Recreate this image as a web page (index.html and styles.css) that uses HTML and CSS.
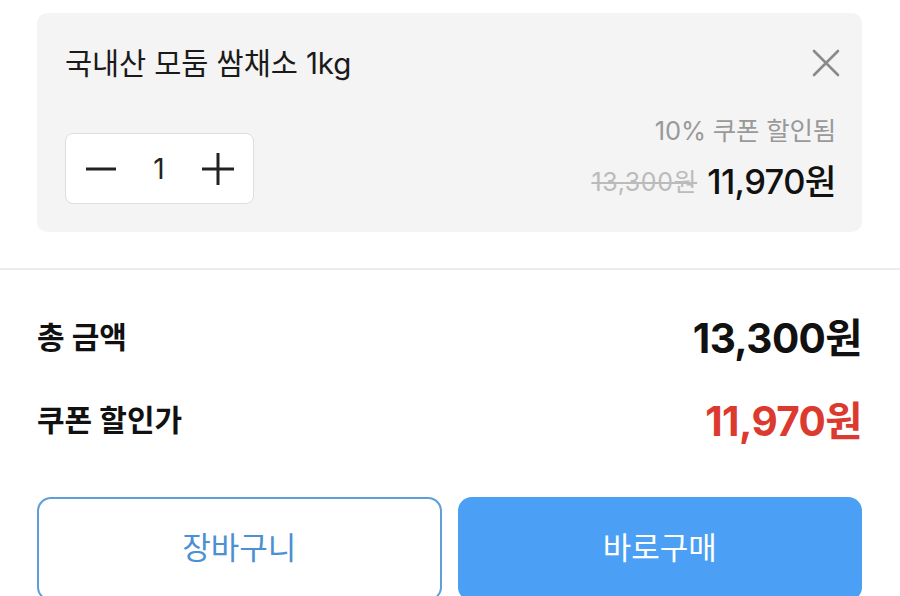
FILE: index.html
```html
<!DOCTYPE html>
<html lang="ko">
<head>
<meta charset="utf-8">
<link rel="stylesheet" href="styles.css">
</head>
<body>
<div class="page">
  <div class="card">
    <div class="card-top">
      <div class="title">국내산 모둠 쌈채소 1kg</div>
      <svg class="close" width="28" height="28" viewBox="0 0 28 28"><path d="M2 2 L26 26 M26 2 L2 26" stroke="#8a8a8a" stroke-width="2.6" stroke-linecap="round" fill="none"/></svg>
    </div>
    <div class="card-bottom">
      <div class="stepper">
        <svg width="30" height="30" viewBox="0 0 30 30"><path d="M0 15 H30" stroke="#222" stroke-width="3"/></svg>
        <span class="qty">1</span>
        <svg width="32" height="32" viewBox="0 0 32 32"><path d="M0 16 H32 M16 0 V32" stroke="#222" stroke-width="3"/></svg>
      </div>
      <div class="prices">
        <div class="coupon">10% 쿠폰 할인됨</div>
        <div class="price-line"><span class="orig">13,300원</span><span class="final">11,970원</span></div>
      </div>
    </div>
  </div>
</div>
<div class="divider"></div>
<div class="page">
  <div class="summary">
    <div class="row"><span class="label">총 금액</span><span class="amount">13,300원</span></div>
    <div class="row"><span class="label">쿠폰 할인가</span><span class="amount red">11,970원</span></div>
  </div>
  <div class="buttons">
    <button class="btn outline">장바구니</button>
    <button class="btn solid">바로구매</button>
  </div>
</div>
</body>
</html>
```
FILE: styles.css
```css
* { box-sizing: border-box; }
html, body { margin: 0; padding: 0; background: #fff; overflow: hidden; }
body {
  font-family: Inter, "Noto Sans CJK KR", sans-serif;
  color: #111;
  width: 900px;
  height: 596px;
}
.page { padding: 0 38px 0 37px; }
.card {
  margin-top: 13px;
  height: 219px;
  background: #f4f4f4;
  border-radius: 10px;
  padding: 32px 28px 28px 28px;
  display: flex;
  flex-direction: column;
  justify-content: space-between;
}
.card-top { display: flex; justify-content: space-between; align-items: center; }
.title { font-size: 29.5px; line-height: 36px; color: #1a1a1a; letter-spacing: -0.1px; }
.close { margin-right: -6px; }
.card-bottom { display: flex; justify-content: space-between; align-items: flex-end; }
.stepper {
  width: 189px;
  height: 71px;
  background: #fff;
  border: 1px solid #dedede;
  border-radius: 8px;
  display: flex;
  align-items: center;
  justify-content: space-between;
  padding: 0 19px 0 20px;
}
.qty { font-size: 28px; color: #222; }
.prices { display: flex; flex-direction: column; align-items: flex-end; margin-right: -2px; }
.coupon { font-size: 25.5px; line-height: 32px; color: #999; letter-spacing: -0.2px; }
.price-line { margin-top: 13px; line-height: 44px; display: flex; align-items: center; gap: 10px; }
.orig { font-size: 25px; color: #bbb; text-decoration: line-through; letter-spacing: 0.6px; }
.final { font-size: 34.5px; color: #111; font-weight: 500; letter-spacing: -0.6px; }
.divider { margin-top: 36px; height: 2px; background: #ececec; }
.summary { padding-top: 40px; }
.row { display: flex; justify-content: space-between; align-items: center; height: 50px; }
.row + .row { margin-top: 33px; }
.label { font-size: 30px; font-weight: 700; color: #111; }
.amount { font-size: 40.5px; font-weight: 700; color: #111; letter-spacing: -0.6px; }
.amount.red { color: #dc3a2f; }
.buttons { margin-top: 54px; display: grid; grid-template-columns: 1fr 1fr; gap: 16px; }
.btn {
  height: 104px;
  border-radius: 14px;
  font-family: "Noto Sans CJK KR", sans-serif;
  font-size: 31px;
  padding: 0 0 8px 0;
}
.btn.outline { background: #fff; border: 2px solid #5f9fd8; color: #4a90d2; }
.btn.solid { background: #4b9ff5; border: none; color: #fff; }
```
